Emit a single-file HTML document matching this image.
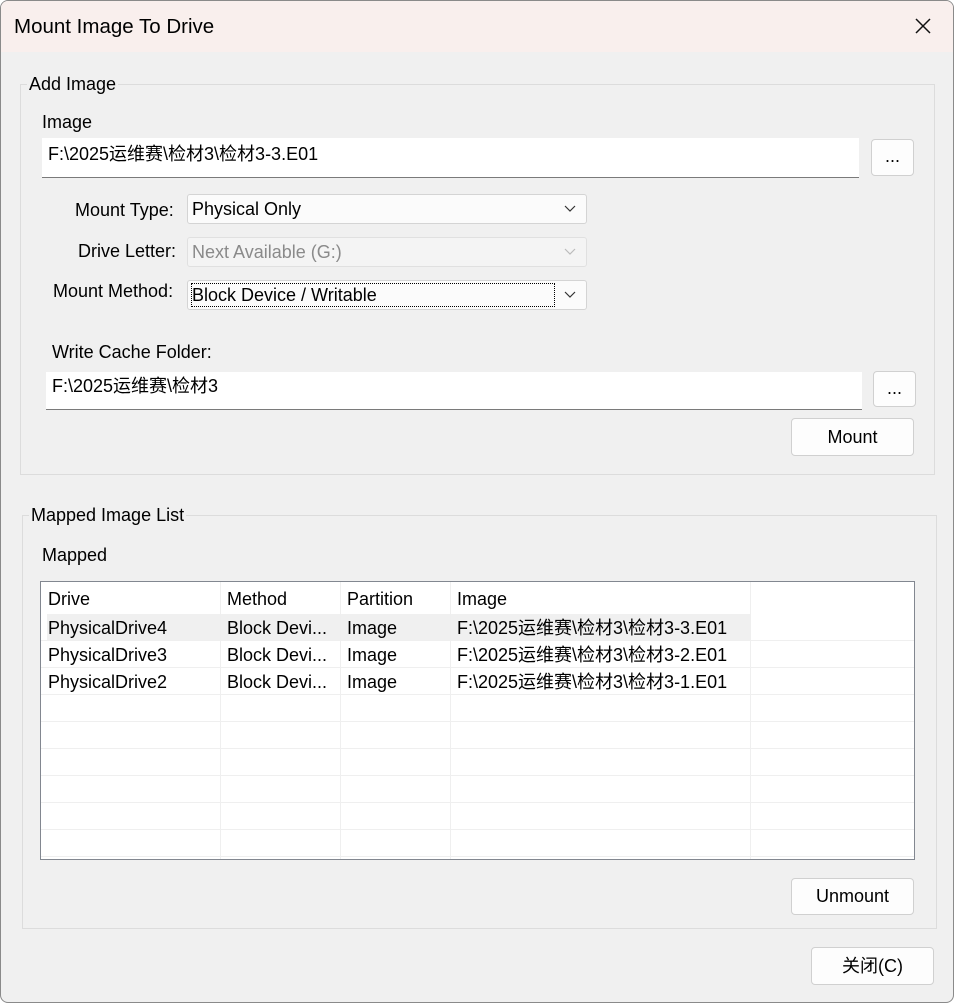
<!DOCTYPE html>
<html><head><meta charset="utf-8"><style>
*{box-sizing:border-box;margin:0;padding:0}
body{width:954px;height:1003px;background:#fff;font-family:"Segoe UI","Liberation Sans","Noto Sans CJK SC",sans-serif;font-size:18px;color:#000;position:relative;overflow:hidden}
.win{position:absolute;left:0;top:0;width:954px;height:1003px;background:#f0f0f0;box-shadow:inset 0 0 0 1px #8a8a8a;border-radius:8px;overflow:hidden}
.title{position:absolute;left:1px;top:1px;width:952px;height:51px;background:#f9efed;border-radius:7px 7px 0 0}
.a{position:absolute;white-space:nowrap;line-height:22px}
.grp{position:absolute;border:1px solid #dcdcdc}
.lab{position:absolute;background:#f0f0f0;padding:0 2px;line-height:20px}
.inp{position:absolute;background:#fff;border-bottom:1px solid #7a7a7a;padding-left:6px}
.btn{position:absolute;background:#fdfdfd;border:1px solid #d0d0d0;border-radius:4px;text-align:center}
.cmb{position:absolute;background:#fbfbfb;border:1px solid #d4d4d4;border-radius:3px;padding-left:4px;line-height:28px}
.cmb svg{position:absolute;right:10px;top:10px}
.list{position:absolute;left:40px;top:581px;width:875px;height:279px;background:#fff;border:1px solid #828790}
.hl{position:absolute;height:1px;background:#efefef;left:0}
.vl{position:absolute;width:1px;background:#efefef;top:0}
</style></head><body><div class="win">
<div class="title"></div>
<div class="a" style="left:14px;top:16px;font-size:20.5px">Mount Image To Drive</div>
<svg class="a" style="left:914px;top:17px" width="18" height="18"><path d="M2 2L16 16M16 2L2 16" stroke="#111" stroke-width="1.5"/></svg>

<div class="grp" style="left:20px;top:84px;width:915px;height:391px"></div>
<div class="lab" style="left:27px;top:74px">Add Image</div>
<div class="a" style="left:42px;top:111px">Image</div>
<div class="inp" style="left:42px;top:138px;width:817px;height:40px;line-height:32px">F:\2025运维赛\检材3\检材3-3.E01</div>
<div class="btn" style="left:871px;top:139px;width:43px;height:37px;line-height:32px">...</div>

<div class="a" style="left:75px;top:199px">Mount Type:</div>
<div class="cmb" style="left:187px;top:194px;width:400px;height:30px">Physical Only<svg width="12" height="8"><path d="M1 1L6 6L11 1" fill="none" stroke="#333" stroke-width="1.2"/></svg></div>
<div class="a" style="left:78px;top:240px">Drive Letter:</div>
<div class="cmb" style="left:187px;top:237px;width:400px;height:30px;color:#8a8a8a;background:#f4f4f4;border-color:#e0e0e0">Next Available (G:)<svg width="12" height="8"><path d="M1 1L6 6L11 1" fill="none" stroke="#bbb" stroke-width="1.2"/></svg></div>
<div class="a" style="left:53px;top:280px">Mount Method:</div>
<div class="cmb" style="left:187px;top:280px;width:400px;height:30px"><span style="display:inline-block;outline:1px dotted #000;width:362px;line-height:22px;margin-top:2px">Block Device / Writable</span><svg width="12" height="8"><path d="M1 1L6 6L11 1" fill="none" stroke="#333" stroke-width="1.2"/></svg></div>

<div class="a" style="left:52px;top:341px">Write Cache Folder:</div>
<div class="inp" style="left:46px;top:372px;width:816px;height:38px;line-height:28px">F:\2025运维赛\检材3</div>
<div class="btn" style="left:873px;top:371px;width:43px;height:36px;line-height:32px">...</div>
<div class="btn" style="left:791px;top:418px;width:123px;height:38px;line-height:36px">Mount</div>

<div class="grp" style="left:22px;top:515px;width:915px;height:414px"></div>
<div class="lab" style="left:29px;top:505px">Mapped Image List</div>
<div class="a" style="left:42px;top:544px">Mapped</div>
<div class="list">
<div class="a" style="left:6px;top:32px;width:703px;height:27px;background:#f0f0f0"></div>
<div class="vl" style="left:179px;height:277px"></div><div class="vl" style="left:299px;height:277px"></div><div class="vl" style="left:409px;height:277px"></div><div class="vl" style="left:709px;height:277px"></div>
<div class="hl" style="top:58px;width:873px"></div><div class="hl" style="top:85px;width:873px"></div><div class="hl" style="top:112px;width:873px"></div><div class="hl" style="top:139px;width:873px"></div><div class="hl" style="top:166px;width:873px"></div><div class="hl" style="top:193px;width:873px"></div><div class="hl" style="top:220px;width:873px"></div><div class="hl" style="top:247px;width:873px"></div><div class="hl" style="top:274px;width:873px"></div>
<div class="a" style="left:7px;top:6px">Drive</div><div class="a" style="left:186px;top:6px">Method</div><div class="a" style="left:306px;top:6px">Partition</div><div class="a" style="left:416px;top:6px">Image</div>
<div class="a" style="left:7px;top:35px">PhysicalDrive4</div><div class="a" style="left:186px;top:35px">Block Devi...</div><div class="a" style="left:306px;top:35px">Image</div><div class="a" style="left:416px;top:35px">F:\2025运维赛\检材3\检材3-3.E01</div>
<div class="a" style="left:7px;top:62px">PhysicalDrive3</div><div class="a" style="left:186px;top:62px">Block Devi...</div><div class="a" style="left:306px;top:62px">Image</div><div class="a" style="left:416px;top:62px">F:\2025运维赛\检材3\检材3-2.E01</div>
<div class="a" style="left:7px;top:89px">PhysicalDrive2</div><div class="a" style="left:186px;top:89px">Block Devi...</div><div class="a" style="left:306px;top:89px">Image</div><div class="a" style="left:416px;top:89px">F:\2025运维赛\检材3\检材3-1.E01</div>
</div>
<div class="btn" style="left:791px;top:878px;width:123px;height:37px;line-height:35px">Unmount</div>
<div class="btn" style="left:811px;top:947px;width:123px;height:38px;line-height:36px">关闭(C)</div>
</div></body></html>
